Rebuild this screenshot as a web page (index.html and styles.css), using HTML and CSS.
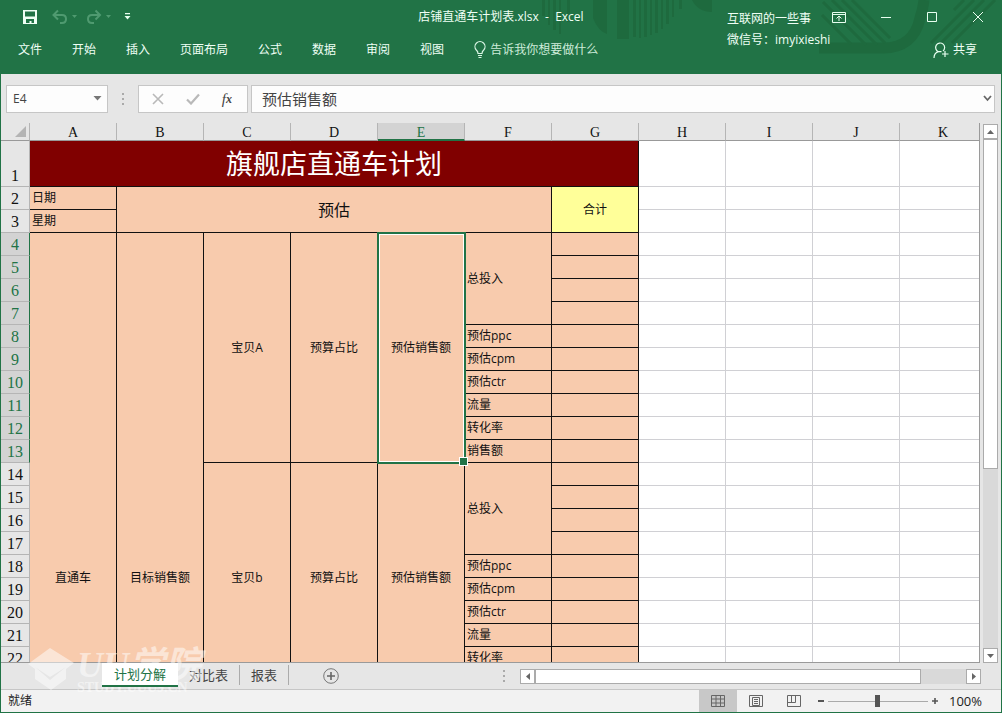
FILE: index.html
```html
<!DOCTYPE html>
<html lang="zh-CN">
<head>
<meta charset="utf-8">
<title>店铺直通车计划表.xlsx - Excel</title>
<link rel="stylesheet" href="styles.css">
</head>
<body>
<div class="window">
  <header class="ribbon">
    <svg class="decor" width="480" height="74" viewBox="0 0 480 74" aria-hidden="true">
      <g fill="#1e6a3e">
        <path d="M21 0h3v16h-3zM27 0h2v25h-2zM32 0h3v30h-3zM38 0h2v34h-2zM46 0h3v22h-3zM72 0h14v34q-9-3-14-16zM96 0h12v39h-12zM112 0h3v37h-3zM118 0h2v38h-2zM123 0h3v37h-3zM129 0h2v35h-2zM134 0h3v33h-3zM140 0h2v29h-2zM145 0h3v24h-3zM151 0h2v17h-2zM158 0h3v9h-3zM171 0h20v12q-14 0-20-12z"/>
      </g>
      <g fill="none" stroke="#1e6a3e">
        <path d="M298 48h64c20 0 33-10 37-30q3-8 4-18" stroke-width="11"/>
        <path d="M302 2l43 43M311 0l45 45M321 0l43 43M331 0l38 38M301 15l29 29" stroke-width="3"/>
        <path d="M410 43L453 0M420 43L463 0M431 43L474 0M433 10L443 0" stroke-width="3"/>
      </g>
    </svg>
    <div class="titlebar">
      <div class="quick">
        <button class="bare" aria-label="保存"><svg width="16" height="16" viewBox="0 0 16 16"><path d="M1 1h14v14H1z" fill="#effff5"/><path d="M3 2.500h10v5H3zM4 10h8v4H9.500v-2h-2v2H4z" fill="#217346"/></svg></button>
        <button class="bare undo" aria-label="撤消"><svg width="26" height="16" viewBox="0 0 26 16"><path d="M2 6h8q4 0 4 4t-4 4H8M6 1.500L1.500 6 6 10.500" fill="none" stroke="#4f9a70" stroke-width="2"/><path d="M20 6h5l-2.500 3z" fill="#4f9a70"/></svg></button>
        <button class="bare redo" aria-label="恢复"><svg width="26" height="16" viewBox="0 0 26 16"><path d="M13 6H6q-4 0-4 4t4 4h2M9.500 1.500L14 6l-4.500 4.500" fill="none" stroke="#4f9a70" stroke-width="2"/><path d="M20 6h5l-2.500 3z" fill="#4f9a70"/></svg></button>
        <button class="bare" aria-label="自定义快速访问工具栏"><svg width="7" height="8" viewBox="0 0 7 8"><path d="M1 0h5v1.300H1zM.5 3h6L3.500 6.500z" fill="#e8fff0"/></svg></button>
      </div>
      <h1 class="doc-title">店铺直通车计划表.xlsx&nbsp; -&nbsp; Excel</h1>
      <div class="controls">
        <button class="bare" aria-label="功能区显示选项"><svg width="14" height="12" viewBox="0 0 14 12"><path d="M.5 1.500h13v10H.5zM.5 3.500h13M7 10V5.500M4.500 7.500L7 5l2.500 2.500" fill="none" stroke="#e8fff0"/></svg></button>
        <button class="bare" aria-label="最小化"><svg width="12" height="12" viewBox="0 0 12 12"><path d="M1 6.500h10" stroke="#e8fff0"/></svg></button>
        <button class="bare" aria-label="最大化"><svg width="12" height="12" viewBox="0 0 12 12"><path d="M1.500 1.500h9v9h-9z" fill="none" stroke="#e8fff0"/></svg></button>
        <button class="bare" aria-label="关闭"><svg width="12" height="12" viewBox="0 0 12 12"><path d="M1 1l10 10M11 1L1 11" stroke="#e8fff0"/></svg></button>
      </div>
    </div>
    <nav class="tabs">
      <a href="#">文件</a><a href="#">开始</a><a href="#">插入</a><a href="#">页面布局</a><a href="#">公式</a><a href="#">数据</a><a href="#">审阅</a><a href="#">视图</a>
      <button class="bare tell"><svg width="12" height="18" viewBox="0 0 12 18"><path d="M4 12.500q0-2-1.700-3.500A5 5 0 1 1 9.700 9Q8 10.500 8 12.500zM4 14.500h4M4.500 16.500h3" fill="none" stroke="#d9f5e4" stroke-width="1.200"/></svg>告诉我你想要做什么</button>
      <button class="bare share"><svg width="16" height="17" viewBox="0 0 16 17"><path d="M1 16q0-5 4.500-6.300a4.500 4.500 0 1 1 4.500-.7M12 9v6M9 12h6.500M5.500 9.700h3" fill="none" stroke="#e8fff0" stroke-width="1.200"/></svg>共享</button>
    </nav>
    <p class="credit">互联网的一些事<br>微信号：imyixieshi</p>
  </header>

  <div class="formula">
    <div class="box name"><input value="E4" aria-label="名称框"><button class="bare" aria-label="展开名称框"><svg width="9" height="5" viewBox="0 0 9 5"><path d="M.5 0h8l-4 4.500z" fill="#777"/></svg></button></div>
    <svg class="dots" width="2" height="12" viewBox="0 0 2 12"><path d="M0 0h2v2H0zM0 5h2v2H0zM0 10h2v2H0z" fill="#aaa"/></svg>
    <div class="box tools">
      <button class="bare" aria-label="取消"><svg width="12" height="12" viewBox="0 0 12 12"><path d="M1 1l10 10M11 1L1 11" stroke="#b9b9b9" stroke-width="1.600"/></svg></button>
      <button class="bare" aria-label="输入"><svg width="14" height="12" viewBox="0 0 14 12"><path d="M1 6.500L5 10.500 13 1.500" fill="none" stroke="#b9b9b9" stroke-width="2.200"/></svg></button>
      <button class="bare fx" aria-label="插入函数"><i>f</i><small>x</small></button>
    </div>
    <div class="box entry"><input value="预估销售额" aria-label="编辑栏"><button class="bare" aria-label="展开编辑栏"><svg width="9" height="7" viewBox="0 0 9 7"><path d="M1 1l3.500 4L8 1" fill="none" stroke="#666" stroke-width="1.800"/></svg></button></div>
  </div>

  <main class="work">
    <div class="sheet">
      <table class="grid">
        <colgroup><col class="c-head"><col span="11" class="c-cell"></colgroup>
        <thead>
          <tr><th class="corner"><svg width="11" height="11" viewBox="0 0 11 11"><path d="M11 0v11H0z" fill="#b4b4b4"/></svg></th><th>A</th><th>B</th><th>C</th><th>D</th><th class="on">E</th><th>F</th><th>G</th><th>H</th><th>I</th><th>J</th><th>K</th></tr>
        </thead>
        <tbody>
          <tr class="tall"><th>1</th><td colspan="7" class="heading">旗舰店直通车计划</td><td></td><td></td><td></td><td></td></tr>
          <tr><th>2</th><td class="p">日期</td><td class="p mid big" colspan="5" rowspan="2">预估</td><td class="p mid sum" rowspan="2">合计</td><td></td><td></td><td></td><td></td></tr>
          <tr><th>3</th><td class="p">星期</td><td></td><td></td><td></td><td></td></tr>
          <tr><th class="on">4</th><td class="p mid" rowspan="30">直通车</td><td class="p mid" rowspan="30">目标销售额</td><td class="p mid" rowspan="10">宝贝A</td><td class="p mid" rowspan="10">预算占比</td><td class="p mid active" rowspan="10">预估销售额</td><td class="p" rowspan="4">总投入</td><td class="p"></td><td></td><td></td><td></td><td></td></tr>
          <tr><th class="on">5</th><td class="p"></td><td></td><td></td><td></td><td></td></tr>
          <tr><th class="on">6</th><td class="p"></td><td></td><td></td><td></td><td></td></tr>
          <tr><th class="on">7</th><td class="p"></td><td></td><td></td><td></td><td></td></tr>
          <tr><th class="on">8</th><td class="p">预估ppc</td><td class="p"></td><td></td><td></td><td></td><td></td></tr>
          <tr><th class="on">9</th><td class="p">预估cpm</td><td class="p"></td><td></td><td></td><td></td><td></td></tr>
          <tr><th class="on">10</th><td class="p">预估ctr</td><td class="p"></td><td></td><td></td><td></td><td></td></tr>
          <tr><th class="on">11</th><td class="p">流量</td><td class="p"></td><td></td><td></td><td></td><td></td></tr>
          <tr><th class="on">12</th><td class="p">转化率</td><td class="p"></td><td></td><td></td><td></td><td></td></tr>
          <tr><th class="on">13</th><td class="p">销售额</td><td class="p"></td><td></td><td></td><td></td><td></td></tr>
          <tr><th>14</th><td class="p mid" rowspan="10">宝贝b</td><td class="p mid" rowspan="10">预算占比</td><td class="p mid" rowspan="10">预估销售额</td><td class="p" rowspan="4">总投入</td><td class="p"></td><td></td><td></td><td></td><td></td></tr>
          <tr><th>15</th><td class="p"></td><td></td><td></td><td></td><td></td></tr>
          <tr><th>16</th><td class="p"></td><td></td><td></td><td></td><td></td></tr>
          <tr><th>17</th><td class="p"></td><td></td><td></td><td></td><td></td></tr>
          <tr><th>18</th><td class="p">预估ppc</td><td class="p"></td><td></td><td></td><td></td><td></td></tr>
          <tr><th>19</th><td class="p">预估cpm</td><td class="p"></td><td></td><td></td><td></td><td></td></tr>
          <tr><th>20</th><td class="p">预估ctr</td><td class="p"></td><td></td><td></td><td></td><td></td></tr>
          <tr><th>21</th><td class="p">流量</td><td class="p"></td><td></td><td></td><td></td><td></td></tr>
          <tr><th>22</th><td class="p">转化率</td><td class="p"></td><td></td><td></td><td></td><td></td></tr>
          <tr><th></th><td class="p"></td><td class="p"></td><td></td><td></td><td></td><td></td></tr>
          <tr><th></th></tr><tr><th></th></tr><tr><th></th></tr><tr><th></th></tr><tr><th></th></tr>
          <tr><th></th></tr><tr><th></th></tr><tr><th></th></tr><tr><th></th></tr><tr><th></th></tr>
        </tbody>
      </table>
    </div>
    <div class="vscroll">
      <button class="arrow" aria-label="向上滚动"><svg width="7" height="4" viewBox="0 0 7 4"><path d="M0 4h7L3.500 0z" fill="#666"/></svg></button>
      <div class="vthumb"></div><div class="vtrack"></div>
      <button class="arrow" aria-label="向下滚动"><svg width="7" height="4" viewBox="0 0 7 4"><path d="M0 0h7L3.500 4z" fill="#666"/></svg></button>
    </div>
  </main>

  <div class="sheetbar">
    <div class="sheettabs">
      <button class="stab current">计划分解</button><button class="stab">对比表</button><button class="stab">报表</button>
      <button class="bare add" aria-label="新工作表"><svg width="16" height="16" viewBox="0 0 16 16"><circle cx="8" cy="8" r="7.300" fill="none" stroke="#777"/><path d="M4 8h8M8 4v8" stroke="#666" stroke-width="1.600"/></svg></button>
    </div>
    <svg class="dots" width="2" height="12" viewBox="0 0 2 12"><path d="M0 0h2v2H0zM0 5h2v2H0zM0 10h2v2H0z" fill="#aaa"/></svg>
    <div class="hscroll">
      <button class="arrow" aria-label="向左滚动"><svg width="4" height="7" viewBox="0 0 4 7"><path d="M4 0v7L0 3.500z" fill="#666"/></svg></button>
      <div class="hthumb"></div><div class="htrack"></div>
      <button class="arrow" aria-label="向右滚动"><svg width="4" height="7" viewBox="0 0 4 7"><path d="M0 0v7l4-3.500z" fill="#666"/></svg></button>
    </div>
    <div class="mark" aria-hidden="true">
      <svg width="46" height="46" viewBox="0 0 46 46"><path d="M22 1l24 15-8 6v10L23 43 7 32V22L0 17zM7 20l15 10 16-10-16 13z" fill="#fff" fill-rule="evenodd"/></svg>
      <div><b>UU学院</b><small>STUDY.UUU9.CN</small></div>
    </div>
  </div>

  <footer class="status">
    <span class="ready">就绪</span>
    <button class="view picked" aria-label="普通"><svg width="14" height="14" viewBox="0 0 14 14"><path d="M.5 1.500h13v11H.5zM.5 5h13M.5 9h13M5 1.500v11M9.500 1.500v11" fill="none" stroke="#666"/></svg></button>
    <button class="view" aria-label="页面布局"><svg width="14" height="14" viewBox="0 0 14 14"><path d="M.5 1.500h13v11H.5zM3.500 3.500h7v8h-7zM5 5.500h4M5 7.500h4M5 9.500h4" fill="none" stroke="#666"/></svg></button>
    <button class="view" aria-label="分页预览"><svg width="14" height="14" viewBox="0 0 14 14"><path d="M.5 1.500h13v11H.5zM.5 8.500h8v-7M4.500 1.500v7" fill="none" stroke="#666"/></svg></button>
    <button class="bare" aria-label="缩小"><svg width="8" height="8" viewBox="0 0 8 8"><path d="M1 4h6" stroke="#555" stroke-width="2"/></svg></button>
    <input class="zoom" type="range" min="0" max="100" value="50" aria-label="缩放">
    <button class="bare" aria-label="放大"><svg width="8" height="8" viewBox="0 0 8 8"><path d="M1 4h6M4 1v6" stroke="#555" stroke-width="1.600"/></svg></button>
    <span class="percent">100%</span>
  </footer>
</div>
</body>
</html>
```

FILE: styles.css
```css
* { box-sizing: border-box; }
body { margin: 0; font: 12px/16px "Open Sans", "Noto Sans CJK SC", sans-serif; color: #222; }
button, input { font: inherit; color: inherit; }
svg { display: block; flex: none; }
.bare { display: flex; align-items: center; padding: 0; border: 0; background: none; }
.window { display: flex; flex-direction: column; height: 100vh; overflow: hidden; background: #e6e6e6; border: solid #217346; border-width: 0 1px 1px; }

.ribbon { position: relative; flex: none; height: 74px; background: #217346; color: #effff5; }
.decor { position: absolute; top: 0; right: 0; }
.titlebar { position: relative; display: grid; grid-template-columns: 1fr auto 1fr; align-items: center; height: 34px; }
.quick { display: flex; align-items: center; padding-left: 21px; }
.undo { margin-left: 14px; }
.redo { margin: 0 12px 0 8px; }
.doc-title { margin: 0; font-size: 12px; font-weight: 400; }
.controls { display: flex; justify-content: flex-end; align-items: center; gap: 34px; padding-right: 17px; }
.tabs { position: relative; display: flex; align-items: center; gap: 30px; height: 32px; padding: 0 24px 0 17px; }
.tabs a { color: inherit; text-decoration: none; }
.tell { gap: 4px; color: #cdebd9; }
.share { gap: 4px; margin-left: auto; }
.credit { position: absolute; top: 8px; left: 726px; margin: 0; line-height: 21px; }

.formula { display: flex; align-items: center; flex: none; height: 49px; padding: 0 6px 0 5px; }
.box { display: flex; align-items: center; height: 28px; background: #fdfdfd; border: 1px solid #c6c6c6; }
.box input { flex: 1; min-width: 0; padding: 0; border: 0; background: none; outline: 0; }
.name { width: 102px; padding: 0 5px 0 6px; color: #444; }
.formula .dots { margin: 0 14px; }
.tools { width: 110px; justify-content: space-around; margin-right: 3px; padding: 0 4px 0 2px; }
.fx { font-family: "Liberation Serif", serif; font-size: 15px; color: #444; }
.fx small { font-size: 12px; font-style: italic; font-weight: 700; }
.entry { flex: 1; padding: 0 2px 0 10px; font-size: 15px; color: #444; }

.work { display: flex; flex: 1; min-height: 0; }
.sheet { flex: 1; min-width: 0; overflow: hidden; border-right: 1px solid #9a9a9a; border-bottom: 1px solid #9a9a9a; }
.grid { width: 986px; table-layout: fixed; border-spacing: 0; background: #fff; }
.c-head { width: 29px; }
.c-cell { width: 87px; }
.grid tr { height: 23px; }
.grid thead tr { height: 18px; }
.grid .tall { height: 46px; }
.grid th, .grid td { padding: 0; border: solid #d0d0d4; border-width: 0 1px 1px 0; line-height: 16px; }
.grid th { background: #e6e6e6; border-color: #b5b5b5; color: #111; font: 16px/20px "Liberation Serif", serif; vertical-align: bottom; }
.grid thead th { border-bottom-color: #999; font-size: 14px; line-height: 14px; }
.grid .corner svg { margin: 0 3px 3px auto; }
.grid th.on { background: #d3d3d3; color: #217346; }
.grid thead th.on { border-bottom: 2px solid #217346; line-height: 13px; }
.grid tbody th.on { border-right-color: #217346; }
.grid .p { padding: 0 2px; background: #f8cbad; border-color: #111; color: #111; }
.grid .mid { text-align: center; }
.grid .big { font-size: 16px; }
.grid .sum { background: #ffff99; }
.grid .heading { background: #800000; border-color: #111; color: #fff; font-size: 27px; line-height: 40px; text-align: center; }
.active { position: relative; }
.active::before { content: ""; position: absolute; inset: -1px -2px -2px -1px; border: 2px solid #217346; box-shadow: inset 0 0 0 1px #fff; }
.active::after { content: ""; position: absolute; right: -4px; bottom: -4px; width: 7px; height: 7px; background: #217346; border: 1px solid #fff; }

.arrow { display: flex; align-items: center; justify-content: center; flex: none; width: 15px; height: 15px; padding: 0; background: #fff; border: 1px solid #ababab; }
.vscroll { display: flex; flex-direction: column; padding: 1px 3px 0; }
.vthumb { flex: 329; background: #fff; border: 1px solid #ababab; }
.vtrack { flex: 180; background: #d9d9d9; }

.sheetbar { position: relative; display: flex; align-items: center; flex: none; height: 27px; border-bottom: 1px solid #c6c6c6; }
.sheettabs { display: flex; align-items: flex-start; flex: 1; height: 26px; padding-left: 101px; }
.stab { height: 20px; margin-top: 2px; padding: 0 11px; border: 0; border-right: 1px solid #ababab; background: none; font-size: 13px; color: #444; }
.stab.current { position: relative; z-index: 2; height: 24px; margin: 0; padding: 0 12px; background: #fff; border: 0; border-bottom: 2px solid #217346; color: #217346; }
.add { height: 26px; margin-left: 34px; }
.hscroll { display: flex; width: 461px; margin: 0 20px 0 15px; }
.hthumb { flex: 386; background: #fff; border: 1px solid #ababab; }
.htrack { flex: 45; background: #d9d9d9; }
.mark { position: absolute; left: 27px; bottom: -4px; display: flex; align-items: center; gap: 3px; color: #fff; opacity: .5; pointer-events: none; }
.mark b { display: block; font: italic 700 36px/36px "Liberation Serif", "Noto Sans CJK SC", serif; }
.mark small { display: block; font: 700 14px/10px "Liberation Serif", serif; }

.status { display: flex; align-items: center; flex: none; height: 22px; padding: 0 19px 0 7px; background: #f2f2f2; }
.ready { flex: 1; }
.view { display: flex; align-items: center; justify-content: center; width: 38px; height: 22px; padding: 0; border: 0; background: none; }
.picked { background: #c8c8c8; }
.view + .bare { margin-left: 4px; }
.zoom { appearance: none; width: 100px; height: 12px; margin: 0 3px; background: linear-gradient(#aaa, #aaa) center / 100% 1px no-repeat; }
.zoom::-webkit-slider-thumb { appearance: none; width: 5px; height: 12px; background: #555; }
.percent { margin-left: 10px; font-size: 13px; }
```
